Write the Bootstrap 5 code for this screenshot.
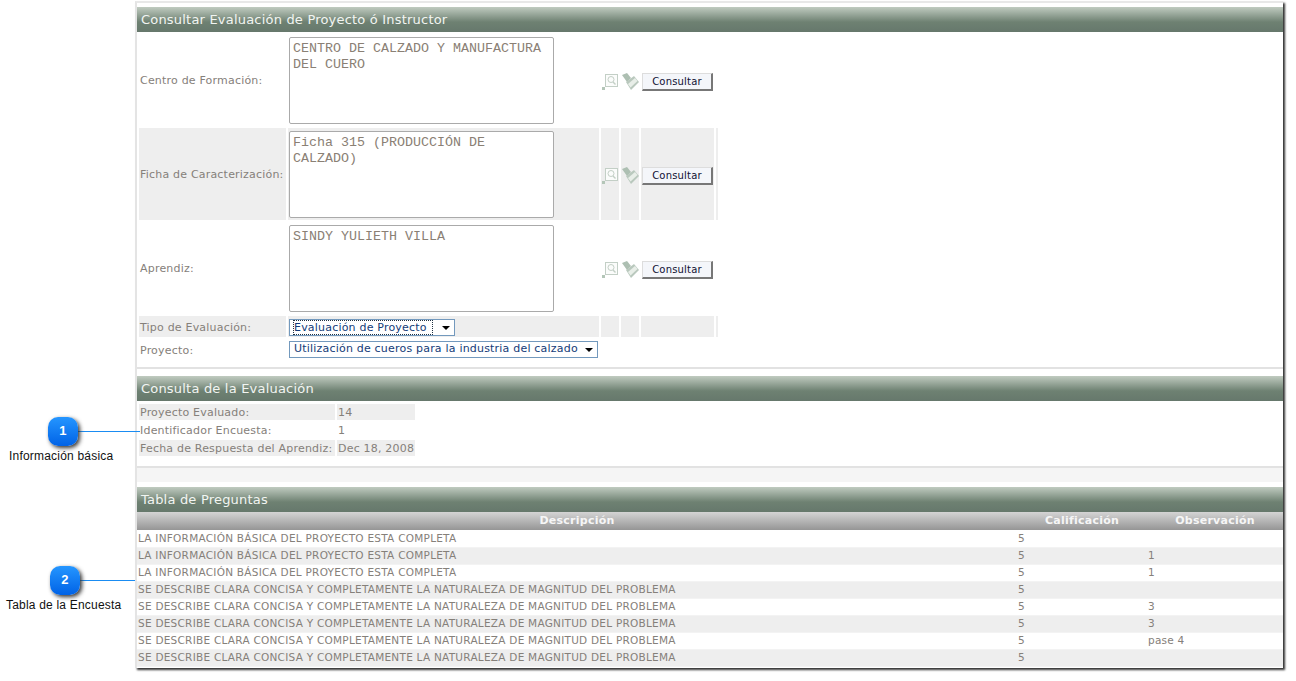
<!DOCTYPE html>
<html lang="es">
<head>
    <meta charset="UTF-8">
    <meta name="viewport" content="width=device-width, initial-scale=1.0">
    <title>Consultar Evaluación</title>
    <link href="https://cdn.jsdelivr.net/npm/bootstrap@5.3.0/dist/css/bootstrap.min.css" rel="stylesheet">
    <style>
        html, body { height: 681px; overflow: hidden; }
        body { background: #fff; font-family: "DejaVu Sans", Verdana, sans-serif; font-size: 11px; color: #85807a; position: relative; letter-spacing: .2px; }
        .shot { padding-left: 135px; padding-top: 1px; }
        .panel-win { width: 1148px; height: 667px; border-left: 2px solid #e4e4e4; border-top: 2px solid #e8e8e8; box-shadow: 2px 2px 2px #333; padding-top: 4px; background: #fff; overflow: hidden; }
        .band { height: 25px; background: linear-gradient(#c0cbc0 0, #6e8172 60%, #66786c 100%); color: #f2f5f2; font-size: 13px; padding-left: 4px; line-height: 25px; }
        table.grid { border-collapse: separate; border-spacing: 2px; }
        table.grid td { padding: 0 1px; vertical-align: middle; white-space: nowrap; }
        table.grid .lbl { padding-top: 3px; }
        .shade td { background: #eee; }
        .tall td { height: 92px; }
        .low td { height: 21px; }
        .shade.low td .pick { margin-top: 2px; }
        .lbl { width: 147px; }
        .field { width: 311px; }
        table.grid .ico { width: 18px; text-align: center; padding: 3px 0 0; }
        table.grid .act { width: 73px; text-align: center; padding-top: 3px; }
        table.grid .tail { width: 2px; padding: 0; }
        .memo { display: block; width: 265px; height: 87px; border: 1px solid #aaa; border-radius: 2px; background: #fff; margin: 0; padding: 3px 3px; font-family: "Liberation Mono", monospace; font-size: 13.33px; line-height: 16px; color: #8a8074; resize: none; letter-spacing: 0; }
        .go { display: block; margin: 0 auto; width: 71px; height: 18px; padding: 0; background: #f4f6fa; border: 0; border-right: 2px solid #777; border-bottom: 2px solid #777; border-top: 1px solid #ddd; border-left: 1px solid #ddd; font-size: 10px; line-height: 15px; color: #111133; font-family: inherit; letter-spacing: .2px; }
        .pick { display: inline-flex; align-items: center; justify-content: space-between; height: 17px; border: 1px solid #7399bd; color: #143c78; font-size: 11px; padding: 0 4px; background: #fff; vertical-align: middle; white-space: nowrap; }
        .pick i { border-left: 4px solid transparent; border-right: 4px solid transparent; border-top: 4px solid #000; margin-left: 4px; }
        .pick .sel { outline: 1px dotted #234; padding: 0 5px 0 0; line-height: 13px; margin-right: 1px; }
        .rule { height: 2px; background: #e2e2e2; margin: 5px 0 7px; }
        .info { margin-top: 1px; }
        .info td { height: 16px; line-height: 14px; padding-top: 2px !important; }
        .info-key { width: 196px; }
        .info-val { width: 78px; }
        .strip { height: 16px; background: #f5f5f5; border-top: 2px solid #e2e2e2; margin: 8px 0 5px; }
        .qtable { width: 100%; border-collapse: collapse; table-layout: fixed; font-size: 10.5px; letter-spacing: .25px; }
        .qtable th { height: 18px; padding: 0; background: linear-gradient(#d4d4d4, #959595); color: #f6f6f6; font-size: 11px; font-weight: 700; text-align: center; }
        .qtable td { height: 17px; padding: 0 0 0 1px; border-bottom: 1px solid #f3f3f3; line-height: 15px; white-space: nowrap; }
        .qtable tr:nth-child(even) td { background: #eee; }
        .callout { position: absolute; width: 30px; height: 29px; border-radius: 10px; background: linear-gradient(#2596ff, #0062e6); color: #fff; font: 700 13px/28px "Liberation Sans", sans-serif; text-align: center; box-shadow: 2px 2px 4px #333; }
        .leader { position: absolute; height: 1px; background: #1a8cf2; }
        .note { position: absolute; font: 12px/14px "Liberation Sans", Arial, sans-serif; color: #111; white-space: nowrap; letter-spacing: .2px; }
    </style>
</head>
<body>
    <svg width="0" height="0" class="position-absolute">
        <symbol id="lens" viewBox="0 0 17 17">
            <rect x="3.5" y="1.5" width="12" height="12" fill="#fbfcfb" stroke="#c3cfc6"/>
            <circle cx="9" cy="6.5" r="3" fill="none" stroke="#c3cfc6"/>
            <path d="M11 9l2.5 2.5" stroke="#c3cfc6" stroke-width="1.4"/>
            <rect x="0" y="14" width="3" height="3" fill="#b4c6b8"/>
        </symbol>
        <symbol id="brush" viewBox="0 0 17 17">
            <path d="M0 2l5-2 4 5-4 4z" fill="#adbfb2"/>
            <path d="M4 9l8-6 5 6-8 8z" fill="#b9c8bd"/>
            <path d="M6 11l7-6 2.500 3-7 6.500z" fill="#e8eee8"/>
        </symbol>
    </svg>

    <div class="shot">
        <div class="panel-win">
            <div class="band">Consultar Evaluación de Proyecto ó Instructor</div>
            <table class="grid">
                <tr class="tall">
                    <td class="lbl">Centro de Formación:</td>
                    <td class="field"><textarea class="memo" readonly>CENTRO DE CALZADO Y MANUFACTURA DEL CUERO</textarea></td>
                    <td class="ico"><svg width="17" height="17"><use href="#lens"/></svg></td>
                    <td class="ico"><svg width="17" height="17"><use href="#brush"/></svg></td>
                    <td class="act"><button class="go" type="button">Consultar</button></td>
                    <td class="tail"></td>
                </tr>
                <tr class="tall shade">
                    <td class="lbl">Ficha de Caracterización:</td>
                    <td class="field"><textarea class="memo" readonly>Ficha 315 (PRODUCCIÓN DE CALZADO)</textarea></td>
                    <td class="ico"><svg width="17" height="17"><use href="#lens"/></svg></td>
                    <td class="ico"><svg width="17" height="17"><use href="#brush"/></svg></td>
                    <td class="act"><button class="go" type="button">Consultar</button></td>
                    <td class="tail"></td>
                </tr>
                <tr class="tall">
                    <td class="lbl">Aprendiz:</td>
                    <td class="field"><textarea class="memo" readonly>SINDY YULIETH VILLA</textarea></td>
                    <td class="ico"><svg width="17" height="17"><use href="#lens"/></svg></td>
                    <td class="ico"><svg width="17" height="17"><use href="#brush"/></svg></td>
                    <td class="act"><button class="go" type="button">Consultar</button></td>
                    <td class="tail"></td>
                </tr>
                <tr class="low shade">
                    <td class="lbl">Tipo de Evaluación:</td>
                    <td class="field"><span class="pick" style="width:166px"><span class="sel">Evaluación de Proyecto</span><i></i></span></td>
                    <td class="ico"></td><td class="ico"></td><td class="act"></td><td class="tail"></td>
                </tr>
                <tr class="low">
                    <td class="lbl">Proyecto:</td>
                    <td class="field"><span class="pick" style="width:309px">Utilización de cueros para la industria del calzado<i></i></span></td>
                    <td colspan="4"></td>
                </tr>
            </table>
            <div class="rule"></div>
            <div class="band">Consulta de la Evaluación</div>
            <table class="grid info">
                <tr class="shade"><td class="info-key">Proyecto Evaluado:</td><td class="info-val">14</td></tr>
                <tr><td class="info-key">Identificador Encuesta:</td><td class="info-val">1</td></tr>
                <tr class="shade"><td class="info-key">Fecha de Respuesta del Aprendiz:</td><td class="info-val">Dec 18, 2008</td></tr>
            </table>
            <div class="strip"></div>
            <div class="band">Tabla de Preguntas</div>
            <table class="qtable">
                <colgroup><col style="width:880px"><col style="width:130px"><col></colgroup>
                <thead><tr><th>Descripción</th><th>Calificación</th><th>Observación</th></tr></thead>
                <tbody>
                    <tr><td>LA INFORMACIÓN BÁSICA DEL PROYECTO ESTA COMPLETA</td><td>5</td><td></td></tr>
                    <tr><td>LA INFORMACIÓN BÁSICA DEL PROYECTO ESTA COMPLETA</td><td>5</td><td>1</td></tr>
                    <tr><td>LA INFORMACIÓN BÁSICA DEL PROYECTO ESTA COMPLETA</td><td>5</td><td>1</td></tr>
                    <tr><td>SE DESCRIBE CLARA CONCISA Y COMPLETAMENTE LA NATURALEZA DE MAGNITUD DEL PROBLEMA</td><td>5</td><td></td></tr>
                    <tr><td>SE DESCRIBE CLARA CONCISA Y COMPLETAMENTE LA NATURALEZA DE MAGNITUD DEL PROBLEMA</td><td>5</td><td>3</td></tr>
                    <tr><td>SE DESCRIBE CLARA CONCISA Y COMPLETAMENTE LA NATURALEZA DE MAGNITUD DEL PROBLEMA</td><td>5</td><td>3</td></tr>
                    <tr><td>SE DESCRIBE CLARA CONCISA Y COMPLETAMENTE LA NATURALEZA DE MAGNITUD DEL PROBLEMA</td><td>5</td><td>pase 4</td></tr>
                    <tr><td>SE DESCRIBE CLARA CONCISA Y COMPLETAMENTE LA NATURALEZA DE MAGNITUD DEL PROBLEMA</td><td>5</td><td></td></tr>
                </tbody>
            </table>
        </div>
    </div>

    <div class="leader" style="left:78px;top:431px;width:62px"></div>
    <div class="callout" style="left:48px;top:417px">1</div>
    <div class="note" style="left:9px;top:449px">Información básica</div>
    <div class="leader" style="left:79px;top:580px;width:56px"></div>
    <div class="callout" style="left:50px;top:566px">2</div>
    <div class="note" style="left:6px;top:598px">Tabla de la Encuesta</div>

    <script src="https://cdn.jsdelivr.net/npm/bootstrap@5.3.0/dist/js/bootstrap.bundle.min.js"></script>
</body>
</html>
